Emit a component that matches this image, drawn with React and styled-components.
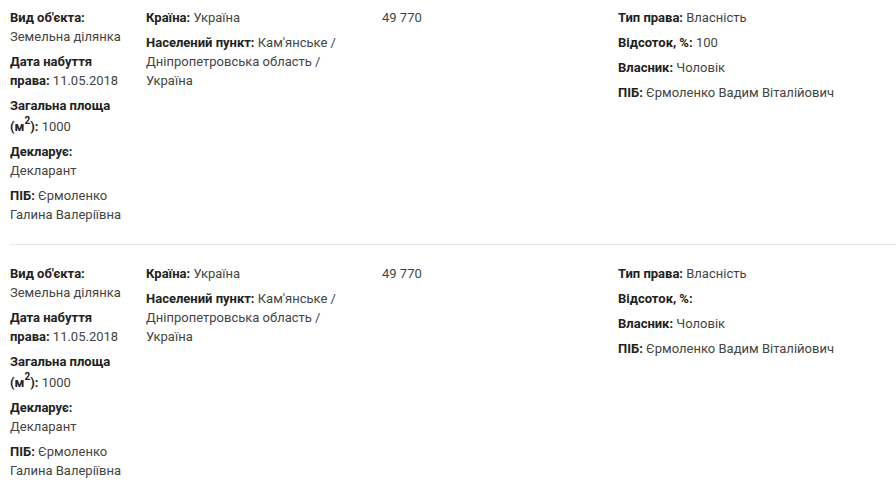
import React from 'react';
import styled, { createGlobalStyle } from 'styled-components';

const rows = [
  { percent: '100' },
  { percent: '' },
];

export default function App() {
  return (
    <>
      <GlobalStyle />
      <Page>
        {rows.map((row, i) => (
          <Row key={i}>
            <Column>
              <Field>
                <Label>Вид об'єкта:</Label> Земельна ділянка
              </Field>
              <Field>
                <Label>Дата набуття права:</Label> 11.05.2018
              </Field>
              <Field>
                <Label>
                  Загальна площа (м<Sup>2</Sup>):
                </Label>{' '}
                1000
              </Field>
              <Field>
                <Label>Декларує:</Label> Декларант
              </Field>
              <Field>
                <Label>ПІБ:</Label> Єрмоленко Галина Валеріївна
              </Field>
            </Column>
            <Column>
              <Field>
                <Label>Країна:</Label> Україна
              </Field>
              <Field>
                <Label>Населений пункт:</Label> Кам'янське / Дніпропетровська область / Україна
              </Field>
            </Column>
            <Column>
              <Field>49 770</Field>
            </Column>
            <Column>
              <Field>
                <Label>Тип права:</Label> Власність
              </Field>
              <Field>
                <Label>Відсоток, %:</Label> {row.percent}
              </Field>
              <Field>
                <Label>Власник:</Label> Чоловік
              </Field>
              <Field>
                <Label>ПІБ:</Label> Єрмоленко Вадим Віталійович
              </Field>
            </Column>
          </Row>
        ))}
      </Page>
    </>
  );
}

const GlobalStyle = createGlobalStyle`
  body {
    margin: 0;
    background: #ffffff;
    font-family: Roboto, "Liberation Sans", sans-serif;
  }
`;

const Page = styled.div`
  padding: 0 0 0 10px;
`;

const Row = styled.div`
  display: grid;
  grid-template-columns: 136px 236px 236px 1fr;
  padding: 19px 0 14px;

  &:first-child {
    padding-top: 8px;
  }

  & + & {
    border-top: 1px solid #e6e6e6;
  }
`;

const Column = styled.div`
  padding-right: 20px;
`;

const Field = styled.div`
  font-size: 13px;
  line-height: 19px;
  color: #444;
  margin-bottom: 6px;
`;

const Label = styled.span`
  font-weight: 700;
  color: #222;
`;

const Sup = styled.sup`
  font-size: 10px;
  line-height: normal;
  vertical-align: 7px;
`;
